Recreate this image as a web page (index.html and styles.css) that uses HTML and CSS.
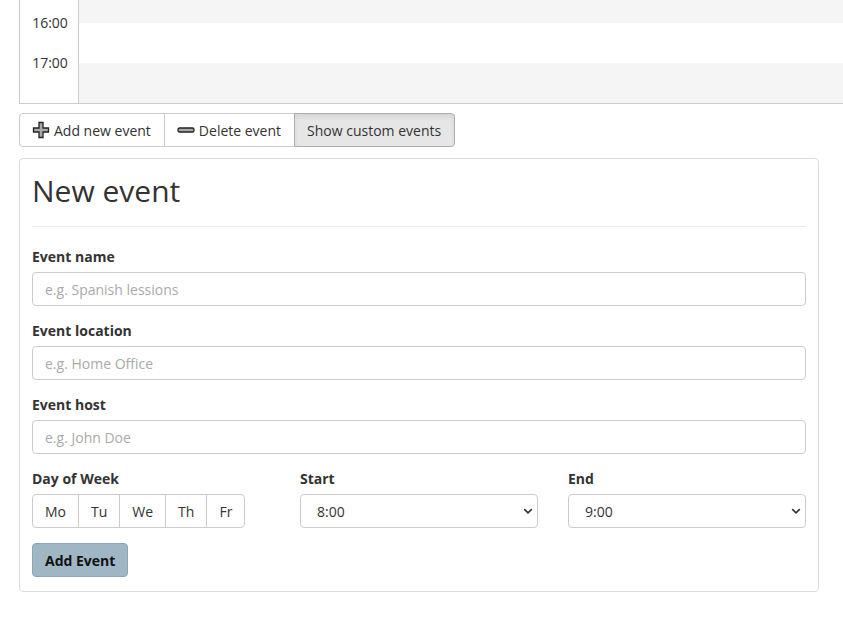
FILE: index.html
```html
<!DOCTYPE html>
<html>
<head>
<meta charset="utf-8">
<link rel="stylesheet" href="styles.css">
</head>
<body>
<div class="calendar">
  <div class="cal-row cal-row-partial gray">
    <div class="time-cell"></div>
    <div class="day-cell"></div>
  </div>
  <div class="cal-row">
    <div class="time-cell"></div>
    <div class="day-cell"></div>
  </div>
  <div class="cal-row gray">
    <div class="time-cell"></div>
    <div class="day-cell"></div>
  </div>
  <div class="time-labels">
    <span class="time-label">16:00</span>
    <span class="time-label">17:00</span>
  </div>
</div>

<div class="content">
  <div class="btn-group">
    <button class="btn">
      <svg class="icon-plus" width="18" height="18" viewBox="0 0 18 18"><path d="M7 1.5h4v5.5h5.5v4h-5.5v5.5h-4v-5.5h-5.5v-4h5.5z" fill="#a9a9a9" stroke="#222" stroke-width="1.3" stroke-linejoin="miter"/></svg>
      Add new event
    </button>
    <button class="btn">
      <svg class="icon-minus" width="18" height="6" viewBox="0 0 18 6"><rect x="1" y="1" width="16" height="4" rx="1.5" fill="#a9a9a9" stroke="#222" stroke-width="1.3"/></svg>
      Delete event
    </button>
    <button class="btn active">Show custom events</button>
  </div>

  <div class="card">
    <div class="page-header"><h1>New event</h1></div>

    <div class="form-group">
      <label>Event name</label>
      <input class="form-control" placeholder="e.g. Spanish lessions">
    </div>
    <div class="form-group">
      <label>Event location</label>
      <input class="form-control" placeholder="e.g. Home Office">
    </div>
    <div class="form-group">
      <label>Event host</label>
      <input class="form-control" placeholder="e.g. John Doe">
    </div>

    <div class="form-row">
      <div class="form-group">
        <label>Day of Week</label>
        <div class="day-group">
          <button class="day-btn">Mo</button>
          <button class="day-btn">Tu</button>
          <button class="day-btn">We</button>
          <button class="day-btn">Th</button>
          <button class="day-btn">Fr</button>
        </div>
      </div>
      <div class="form-group">
        <label>Start</label>
        <div class="select-wrap">
          <select class="form-control select"><option>8:00</option></select>
          <svg class="chevron" width="10" height="6" viewBox="0 0 10 6"><path d="M1.2 1.2l3.8 3.6 3.8-3.6" fill="none" stroke="#333" stroke-width="1.6"/></svg>
        </div>
      </div>
      <div class="form-group">
        <label>End</label>
        <div class="select-wrap">
          <select class="form-control select"><option>9:00</option></select>
          <svg class="chevron" width="10" height="6" viewBox="0 0 10 6"><path d="M1.2 1.2l3.8 3.6 3.8-3.6" fill="none" stroke="#333" stroke-width="1.6"/></svg>
        </div>
      </div>
    </div>

    <button class="btn-primary">Add Event</button>
  </div>
</div>
</body>
</html>
```

FILE: styles.css
```css
html, body {
  margin: 0;
  padding: 0;
  overflow: hidden;
  background: #fff;
}
body {
  font-family: "Open Sans", "Liberation Sans", sans-serif;
  font-size: 14px;
  line-height: 20px;
  color: #333;
}
.calendar {
  position: relative;
  margin-left: 19px;
  border-left: 1px solid #ccc;
  border-bottom: 1px solid #ccc;
}
.cal-row {
  display: flex;
  height: 40px;
}
.cal-row-partial {
  height: 23px;
}
.cal-row.gray .day-cell {
  background: #f5f5f5;
}
.time-cell {
  width: 58px;
  flex: none;
  border-right: 1px solid #ccc;
}
.day-cell {
  flex: 1;
}
.time-labels {
  position: absolute;
  left: 0;
  top: 13px;
  width: 58px;
  display: flex;
  flex-direction: column;
  align-items: center;
  gap: 20px;
}
.time-label {
  display: block;
  line-height: 20px;
  padding-left: 2px;
}
.content {
  width: 800px;
  margin-left: 19px;
}
.btn-group {
  display: inline-flex;
  margin-top: 9px;
}
.btn {
  display: inline-flex;
  align-items: center;
  gap: 4px;
  height: 34px;
  padding: 0 13px 0 12px;
  font-family: inherit;
  font-size: 14px;
  color: #333;
  background: #fff;
  border: 1px solid #ccc;
  margin-left: -1px;
  cursor: pointer;
}
.btn:first-child {
  margin-left: 0;
  border-radius: 4px 0 0 4px;
}
.btn:last-child {
  border-radius: 0 4px 4px 0;
}
.btn.active {
  background: #e6e6e6;
  border-color: #adadad;
  box-shadow: inset 0 3px 5px rgba(0,0,0,0.08);
  position: relative;
}
.icon-plus, .icon-minus {
  display: block;
}
.card {
  margin-top: 11px;
  border: 1px solid #ddd;
  border-radius: 4px;
  padding: 13px 12px 14px;
}
.page-header {
  border-bottom: 1px solid #eee;
  padding-bottom: 9px;
  margin-bottom: 20px;
}
h1 {
  margin: 0 0 8px;
  font-size: 30px;
  font-weight: 400;
  line-height: 37px;
  color: #333;
}
.form-group {
  margin-bottom: 15px;
}
label {
  display: block;
  font-weight: 700;
  margin-bottom: 5px;
}
.form-control {
  display: block;
  box-sizing: border-box;
  width: 100%;
  height: 34px;
  padding: 6px 12px;
  font-family: inherit;
  font-size: 14px;
  color: #555;
  background: #fff;
  border: 1px solid #ccc;
  border-radius: 4px;
}
.form-control::placeholder {
  color: #aaa;
}
.select-wrap {
  position: relative;
}
.select {
  color: #333;
  appearance: none;
  -webkit-appearance: none;
  padding-left: 16px;
}
.chevron {
  position: absolute;
  right: 5px;
  top: 14px;
  pointer-events: none;
}
.form-row {
  display: grid;
  grid-template-columns: repeat(3, 1fr);
  column-gap: 30px;
}
.day-group {
  display: flex;
}
.day-btn {
  height: 34px;
  padding: 0 12px;
  font-family: inherit;
  font-size: 14px;
  color: #333;
  background: #fff;
  border: 1px solid #ccc;
  margin-left: -1px;
}
.day-btn:first-child {
  margin-left: 0;
  border-radius: 4px 0 0 4px;
}
.day-btn:last-child {
  border-radius: 0 4px 4px 0;
}
.btn-primary {
  display: block;
  height: 34px;
  padding: 0 12px;
  font-family: inherit;
  font-size: 14px;
  font-weight: 700;
  color: #111;
  background: #9fb6c5;
  border: 1px solid #8ea7b8;
  border-radius: 4px;
}
```
